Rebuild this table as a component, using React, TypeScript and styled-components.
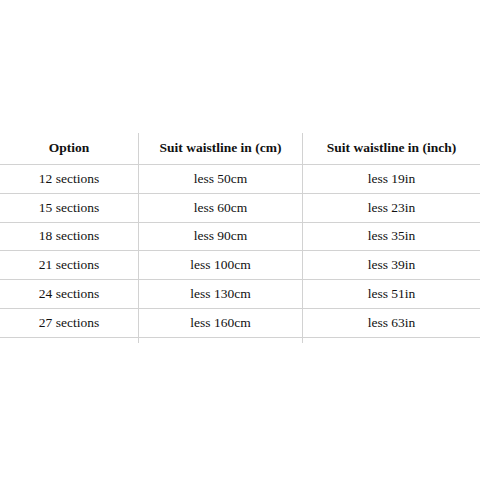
import React from 'react';
import styled, { createGlobalStyle } from 'styled-components';

const GlobalStyle = createGlobalStyle`
  html, body {
    margin: 0;
    padding: 0;
    background: #ffffff;
  }
`;

const Page = styled.div`
  width: 480px;
  height: 480px;
  padding-top: 133px;
  box-sizing: border-box;
  background: #ffffff;
  font-family: "Liberation Serif", "Times New Roman", serif;
  color: #111111;
`;

const Table = styled.table`
  width: 478px;
  table-layout: fixed;
  border-collapse: collapse;
  border-spacing: 0;
`;

const HeadRow = styled.tr`
  height: 31px;
  border-bottom: 1px solid #d2d2d2;
`;

const Row = styled.tr<{ $h: number; $last?: boolean }>`
  height: ${(p) => p.$h}px;
  border-bottom: ${(p) => (p.$last ? 'none' : '1px solid #d2d2d2')};
`;

const HeadCell = styled.th<{ $w: number }>`
  width: ${(p) => p.$w}px;
  padding: 0;
  font-size: 13.5px;
  font-weight: bold;
  text-align: center;
  vertical-align: middle;
  border-right: 1px solid #d2d2d2;
`;

const Cell = styled.td`
  padding: 0;
  font-size: 13.5px;
  text-align: center;
  vertical-align: middle;
  border-right: 1px solid #d2d2d2;
`;

const rows = [
  ['12 sections', 'less 50cm', 'less 19in'],
  ['15 sections', 'less 60cm', 'less 23in'],
  ['18 sections', 'less 90cm', 'less 35in'],
  ['21 sections', 'less 100cm', 'less 39in'],
  ['24 sections', 'less 130cm', 'less 51in'],
  ['27 sections', 'less 160cm', 'less 63in'],
];

const heights = [29, 29, 28, 29, 29, 29];

export default function App() {
  return (
    <>
      <GlobalStyle />
      <Page>
        <Table>
          <thead>
            <HeadRow>
              <HeadCell $w={138}>Option</HeadCell>
              <HeadCell $w={163}>Suit waistline in (cm)</HeadCell>
              <HeadCell $w={177}>Suit waistline in (inch)</HeadCell>
            </HeadRow>
          </thead>
          <tbody>
            {rows.map((r, i) => (
              <Row key={r[0]} $h={heights[i]}>
                {r.map((c) => (
                  <Cell key={c}>{c}</Cell>
                ))}
              </Row>
            ))}
            <Row $h={6} $last>
              <Cell />
              <Cell />
              <Cell />
            </Row>
          </tbody>
        </Table>
      </Page>
    </>
  );
}
